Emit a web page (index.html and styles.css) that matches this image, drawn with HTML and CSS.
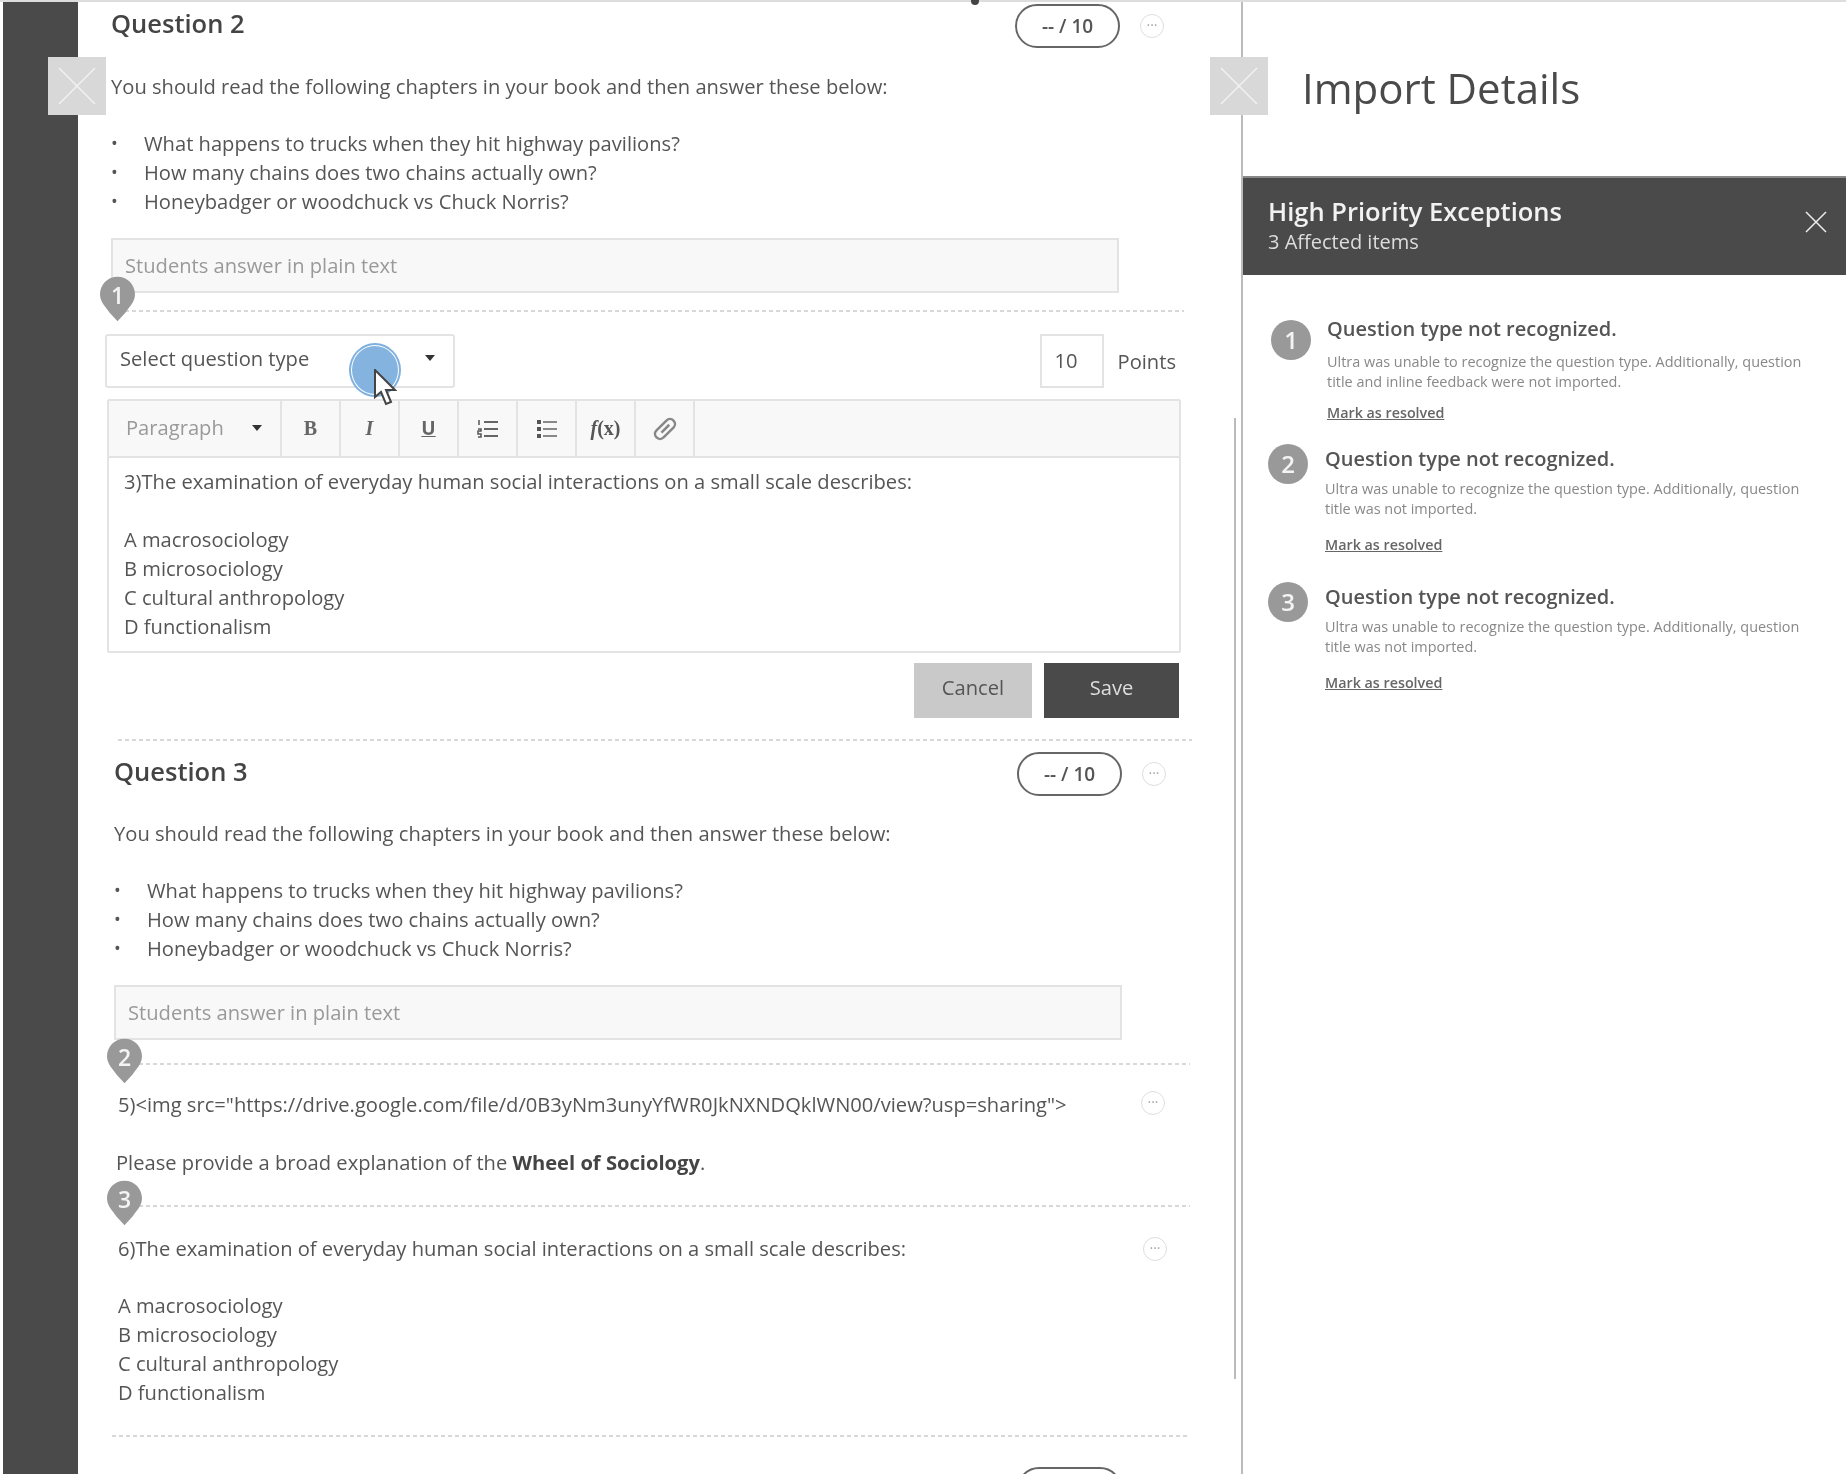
FILE: index.html
```html
<!DOCTYPE html>
<html>
<head>
    <meta charset="utf-8">
    <title>Import Details</title>
    <link rel="stylesheet" href="styles.css">
</head>
<body>
<div class="page">
    <div class="rail"></div>

    <div class="main">
        <span class="speck"></span>
        <div class="scrollbar"></div>

        <div class="q-head q2-head">
            <h3>Question 2</h3>
            <span class="pill">-- / 10</span>
            <span class="dots">&middot;&middot;&middot;</span>
        </div>
        <div class="q-body q2-body">
            <p>You should read the following chapters in your book and then answer these below:</p>
            <ul>
                <li>What happens to trucks when they hit highway pavilions?</li>
                <li>How many chains does two chains actually own?</li>
                <li>Honeybadger or woodchuck vs Chuck Norris?</li>
            </ul>
            <div class="answer">Students answer in plain text</div>
        </div>

        <div class="dash dash-1">
            <span class="pin">1<svg viewBox="0 0 36 46"><path d="M18 0C8 0 0 8 0 18c0 8 6 13 9.500 18.500L18 46l8.500-9.500C30 31 36 26 36 18 36 8 28 0 18 0z"/></svg></span>
        </div>

        <div class="type-row">
            <div class="select">
                <span>Select question type</span>
                <i class="caret"></i>
            </div>
            <div class="points"><span class="points-box">10</span><span>Points</span></div>
            <span class="click-dot"></span>
            <svg class="cursor" viewBox="0 0 24 38"><path d="M2 1v27l6-5 5 12 5-2-5-12h9z" fill="#fff" stroke="#444" stroke-width="2"/></svg>
        </div>

        <div class="editor">
            <div class="toolbar">
                <div class="tool-para"><span>Paragraph</span><i class="caret"></i></div>
                <div class="tool tool-b">B</div>
                <div class="tool tool-i">I</div>
                <div class="tool tool-u">U</div>
                <div class="tool">
                    <svg viewBox="0 0 22 20" width="22" height="20"><path d="M7 3h14M7 10h14M7 17h14" stroke="#666" stroke-width="2"/><path d="M2 1v5M1 10h3v2H1v3h3M1 15h3v3H1" stroke="#555" stroke-width="1.500" fill="none"/></svg>
                </div>
                <div class="tool">
                    <svg viewBox="0 0 22 20" width="22" height="20"><path d="M7 3h14M7 10h14M7 17h14" stroke="#888" stroke-width="2"/><path d="M1 1h4v4H1zM1 8h4v4H1zM1 15h4v4H1z" fill="#555"/></svg>
                </div>
                <div class="tool tool-fx"><i>f</i>(x)</div>
                <div class="tool tool-clip">
                    <svg viewBox="0 0 24 24" width="24" height="24"><g transform="rotate(45 12 12)" fill="none" stroke="#888" stroke-width="2.500"><rect x="7" y="0" width="10" height="24" rx="5"/><path d="M12 6v11"/></g></svg>
                </div>
                <div class="tool-rest"></div>
            </div>
            <div class="editor-text">
                <p>3)The examination of everyday human social interactions on a small scale describes:</p>
                <p class="answers">A macrosociology<br>B microsociology<br>C cultural anthropology<br>D functionalism</p>
            </div>
        </div>

        <div class="actions">
            <span class="btn btn-cancel">Cancel</span>
            <span class="btn btn-save">Save</span>
        </div>

        <div class="dash dash-2"></div>

        <div class="q-head q3-head">
            <h3>Question 3</h3>
            <span class="pill">-- / 10</span>
            <span class="dots">&middot;&middot;&middot;</span>
        </div>
        <div class="q-body q3-body">
            <p>You should read the following chapters in your book and then answer these below:</p>
            <ul>
                <li>What happens to trucks when they hit highway pavilions?</li>
                <li>How many chains does two chains actually own?</li>
                <li>Honeybadger or woodchuck vs Chuck Norris?</li>
            </ul>
            <div class="answer">Students answer in plain text</div>
        </div>

        <div class="dash dash-3">
            <span class="pin">2<svg viewBox="0 0 36 46"><path d="M18 0C8 0 0 8 0 18c0 8 6 13 9.500 18.500L18 46l8.500-9.500C30 31 36 26 36 18 36 8 28 0 18 0z"/></svg></span>
        </div>

        <div class="item item-5">
            <div class="item-line">
                <p>5)&lt;img src="https://drive.google.com/file/d/0B3yNm3unyYfWR0JkNXNDQklWN00/view?usp=sharing"&gt;</p>
                <span class="dots">&middot;&middot;&middot;</span>
            </div>
            <p class="gap">Please provide a broad explanation of the <b>Wheel of Sociology</b>.</p>
        </div>

        <div class="dash dash-4">
            <span class="pin">3<svg viewBox="0 0 36 46"><path d="M18 0C8 0 0 8 0 18c0 8 6 13 9.500 18.500L18 46l8.500-9.500C30 31 36 26 36 18 36 8 28 0 18 0z"/></svg></span>
        </div>

        <div class="item item-6">
            <div class="item-line">
                <p>6)The examination of everyday human social interactions on a small scale describes:</p>
                <span class="dots">&middot;&middot;&middot;</span>
            </div>
            <p class="gap">A macrosociology<br>B microsociology<br>C cultural anthropology<br>D functionalism</p>
        </div>

        <div class="dash dash-5"></div>
        <div class="pill pill-next"></div>

        <span class="close-square close-left"><svg viewBox="0 0 58 58"><path d="M11 11l36 36M47 11 11 47" stroke="#f2f2f2" stroke-width="1.500"/></svg></span>
    </div>

    <div class="panel">
        <span class="close-square close-right"><svg viewBox="0 0 58 58"><path d="M11 11l36 36M47 11 11 47" stroke="#f2f2f2" stroke-width="1.500"/></svg></span>
        <h1>Import Details</h1>
        <div class="panel-bar">
            <div class="bar-text">
                <h2>High Priority Exceptions</h2>
                <div class="bar-sub">3 Affected items</div>
            </div>
            <svg class="bar-close" viewBox="0 0 22 22"><path d="M1 1l20 20M21 1 1 21" stroke="#eee" stroke-width="1.500"/></svg>
        </div>

        <div class="issue issue-1">
            <span class="num">1</span>
            <div>
                <h4>Question type not recognized.</h4>
                <p>Ultra was unable to recognize the question type. Additionally, question title and inline feedback were not imported.</p>
                <a>Mark as resolved</a>
            </div>
        </div>
        <div class="issue issue-2">
            <span class="num">2</span>
            <div>
                <h4>Question type not recognized.</h4>
                <p>Ultra was unable to recognize the question type. Additionally, question title was not imported.</p>
                <a>Mark as resolved</a>
            </div>
        </div>
        <div class="issue issue-3">
            <span class="num">3</span>
            <div>
                <h4>Question type not recognized.</h4>
                <p>Ultra was unable to recognize the question type. Additionally, question title was not imported.</p>
                <a>Mark as resolved</a>
            </div>
        </div>
    </div>
</div>
</body>
</html>
```

FILE: styles.css
```css
html, body {
    margin: 0;
    height: 100%;
    overflow: hidden;
    background: #fff;
}

body {
    font-family: "Open Sans", "Liberation Sans", sans-serif;
    font-size: 20.150px;
    line-height: 29px;
    color: #555;
}

p, h1, h2, h3, h4, ul {
    margin: 0;
    padding: 0;
}

.page {
    display: flex;
    height: 1474px;
    width: 1846px;
    border-top: 2px solid #ddd;
    box-sizing: border-box;
    filter: blur(0.7px);
}

.rail {
    flex: 0 0 75px;
    margin-left: 3px;
    background: #4a4a4a;
}

/* main column */
.main {
    position: relative;
    flex: 0 0 1163px;
    border-right: 2px solid #bbb;
    box-sizing: content-box;
}

.speck {
    position: absolute;
    left: 893px;
    top: -2px;
    width: 8px;
    height: 5px;
    background: #444;
    border-radius: 0 0 4px 4px;
}

.scrollbar {
    position: absolute;
    left: 1156px;
    top: 416px;
    width: 2px;
    height: 961px;
    background: #bbb;
}

.q-head {
    display: flex;
    align-items: center;
    height: 44px;
}

.q-head h3 {
    flex: 1;
    padding-bottom: 5px;
    font-size: 25.500px;
    font-weight: 600;
    color: #444;
}

.q2-head {
    margin: 2px 0 0 33px;
    width: 1053px;
}

.q3-head {
    margin: 11px 0 0 36px;
    width: 1052px;
}

.q3-head h3 {
    padding-bottom: 6px;
}

.pill {
    display: flex;
    align-items: center;
    justify-content: center;
    box-sizing: border-box;
    width: 105px;
    height: 44px;
    border: 2px solid #666;
    border-radius: 22px;
    font-size: 19px;
    font-weight: 600;
    color: #555;
}

.dots {
    display: block;
    flex: none;
    box-sizing: border-box;
    width: 24px;
    height: 24px;
    margin-left: 20px;
    border: 1.500px solid #ddd;
    border-radius: 50%;
    font-size: 14px;
    line-height: 19px;
    text-align: center;
    color: #aaa;
}

.q-body {
    margin-top: 24px;
}

.q2-body {
    margin-left: 33px;
}

.q3-body {
    margin-top: 23px;
    margin-left: 36px;
}

.q-body ul {
    list-style: none;
    margin-top: 28px;
}

.q-body li {
    display: flex;
}

.q-body li::before {
    content: "•";
    flex: 0 0 33px;
    font-size: 18px;
}

.answer {
    box-sizing: border-box;
    width: 1008px;
    height: 55px;
    margin-top: 22px;
    padding: 11px 12px;
    border: 2px solid #e3e3e3;
    background: #f8f8f8;
    color: #999;
}

/* dashed separators */
.dash {
    position: relative;
    height: 2px;
    background: repeating-linear-gradient(90deg, #d8d8d8 0 4px, transparent 4px 7px);
}

.dash-1 {
    margin: 17px 0 0 40px;
    width: 1066px;
}

.dash-2 {
    margin: 21px 0 0 40px;
    width: 1074px;
}

.dash-3 {
    margin: 23px 0 0 40px;
    width: 1072px;
}

.dash-4 {
    margin: 28px 0 0 40px;
    width: 1072px;
}

.dash-5 {
    margin: 28px 0 0 34px;
    width: 1075px;
}

.pin {
    position: absolute;
    left: -18px;
    top: -34px;
    width: 35px;
    height: 46px;
    text-align: center;
    font-size: 23px;
    font-weight: 600;
    line-height: 38px;
    color: #f4f4f4;
    z-index: 1;
}

.pin svg {
    position: absolute;
    left: 0;
    top: 0;
    width: 35px;
    height: 46px;
    fill: #999;
    z-index: -1;
}

.dash-3 .pin, .dash-4 .pin {
    left: -11px;
    top: -25px;
}

/* question type row */
.type-row {
    position: relative;
    display: flex;
    justify-content: space-between;
    align-items: center;
    margin: 22px 0 0 27px;
    width: 1071px;
    height: 54px;
}

.select {
    display: flex;
    align-items: center;
    justify-content: space-between;
    box-sizing: border-box;
    width: 350px;
    height: 54px;
    padding: 0 18px 6px 13px;
    border: 2px solid #e3e3e3;
    border-radius: 3px;
    color: #555;
}

.caret {
    display: inline-block;
    border-left: 5px solid transparent;
    border-right: 5px solid transparent;
    border-top: 6px solid #333;
}

.points {
    display: flex;
    align-items: center;
    gap: 14px;
}

.points-box {
    box-sizing: border-box;
    width: 64px;
    height: 54px;
    padding: 10px 0 0 13px;
    border: 2px solid #e3e3e3;
}

.click-dot {
    position: absolute;
    left: 245px;
    top: 10px;
    box-sizing: border-box;
    width: 50px;
    height: 52px;
    border-radius: 50%;
    border: 2px solid #fff;
    outline: 2px solid #7fb0e0;
    outline-offset: -1px;
    background: #84b3e0;
}

.cursor {
    position: absolute;
    left: 268px;
    top: 35px;
    width: 24px;
    height: 38px;
    z-index: 2;
}

/* editor */
.editor {
    margin: 11px 0 0 29px;
    width: 1074px;
    height: 254px;
    box-sizing: border-box;
    border: 2px solid #e3e3e3;
    border-radius: 2px;
}

.toolbar {
    display: flex;
    height: 55px;
    background: #f8f8f8;
    border-bottom: 2px solid #e3e3e3;
}

.tool-para {
    display: flex;
    align-items: center;
    justify-content: space-between;
    box-sizing: border-box;
    width: 173px;
    padding: 0 18px 2px 17px;
    color: #999;
    border-right: 2px solid #e3e3e3;
}

.tool {
    display: flex;
    align-items: center;
    justify-content: center;
    box-sizing: border-box;
    width: 59px;
    border-right: 2px solid #e3e3e3;
    font-family: "Liberation Serif", serif;
    font-size: 20px;
    color: #666;
}

.tool-b {
    font-weight: bold;
}

.tool-i {
    font-style: italic;
    font-weight: bold;
}

.tool-u {
    text-decoration: underline;
    font-family: "Open Sans", sans-serif;
    font-size: 19px;
    font-weight: 700;
}

.tool-fx {
    font-weight: bold;
    color: #555;
}

.tool-rest {
    flex: 1;
}

.editor-text {
    padding: 9px 15px;
}

.answers {
    margin-top: 29px;
}

.actions {
    display: flex;
    justify-content: flex-end;
    gap: 12px;
    margin: 10px 0 0;
    width: 1101px;
}

.btn {
    display: block;
    box-sizing: border-box;
    height: 55px;
    line-height: 49px;
    text-align: center;
}

.btn-cancel {
    width: 118px;
    background: #c9c9c9;
    color: #555;
}

.btn-save {
    width: 135px;
    background: #4a4a4a;
    color: #ddd;
}

/* plain question items */
.item {
    margin-left: 40px;
}

.item-5 {
    width: 1047px;
    margin-top: 25px;
}

.item-5 .dots {
    margin-bottom: 4px;
}

.item-5 .gap {
    margin-left: -2px;
}

.item-6 {
    width: 1049px;
    margin-top: 27px;
}

.item-line {
    display: flex;
    justify-content: space-between;
    align-items: center;
}

.gap {
    margin-top: 29px;
}

.item-6 .gap {
    margin-top: 28px;
}

.item b {
    font-weight: 700;
    color: #444;
}

.pill-next {
    position: absolute;
    left: 939px;
    top: 1465px;
}

/* x squares over the page */
.close-square {
    position: absolute;
    top: 55px;
    width: 58px;
    height: 58px;
    background: #d8d8d8;
}

.close-square svg {
    display: block;
    width: 58px;
    height: 58px;
}

.close-left {
    left: -30px;
}

.close-right {
    left: -33px;
}

/* right panel */
.panel {
    position: relative;
    flex: 1;
}

.panel h1 {
    padding: 63px 0 0 59px;
    height: 112px;
    box-sizing: border-box;
    font-size: 42px;
    line-height: 46px;
    font-weight: 400;
    color: #4a4a4a;
}

.panel-bar {
    display: flex;
    align-items: center;
    justify-content: space-between;
    box-sizing: border-box;
    height: 99px;
    margin-top: 62px;
    padding: 0 19px 0 25px;
    background: #4a4a4a;
    border-top: 2px solid #888;
    color: #fff;
}

.bar-text {
    padding-bottom: 2px;
}

.panel-bar h2 {
    font-size: 25.500px;
    line-height: 32px;
    font-weight: 600;
    color: #f2f2f2;
}

.bar-sub {
    font-size: 20px;
    line-height: 30px;
    color: #ddd;
}

.bar-close {
    width: 22px;
    height: 22px;
    margin-bottom: 10px;
}

.issue {
    display: flex;
    align-items: flex-start;
}

.issue-1 {
    margin: 45px 0 0 28px;
    gap: 16px;
}

.issue-2 {
    margin: 21px 0 0 25px;
    gap: 17px;
}

.issue-3 {
    margin: 27px 0 0 25px;
    gap: 17px;
}

.num {
    flex: none;
    width: 40px;
    height: 40px;
    border-radius: 50%;
    background: #999;
    color: #f4f4f4;
    font-size: 24px;
    font-weight: 600;
    line-height: 40px;
    text-align: center;
}

.issue h4 {
    font-size: 20px;
    line-height: 26px;
    font-weight: 600;
    color: #555;
}

.issue-1 h4 {
    margin-top: -4px;
}

.issue-2 h4, .issue-3 h4 {
    margin-top: 2px;
}

.issue p {
    width: 480px;
    font-size: 14.450px;
    line-height: 20px;
    color: #888;
}

.issue-1 p {
    margin-top: 10px;
}

.issue-2 p, .issue-3 p {
    margin-top: 7px;
}

.issue a {
    display: block;
    font-size: 14.300px;
    line-height: 20px;
    font-weight: 600;
    color: #666;
    text-decoration: underline;
}

.issue-1 a {
    margin-top: 11px;
}

.issue-2 a, .issue-3 a {
    margin-top: 16px;
}
```
